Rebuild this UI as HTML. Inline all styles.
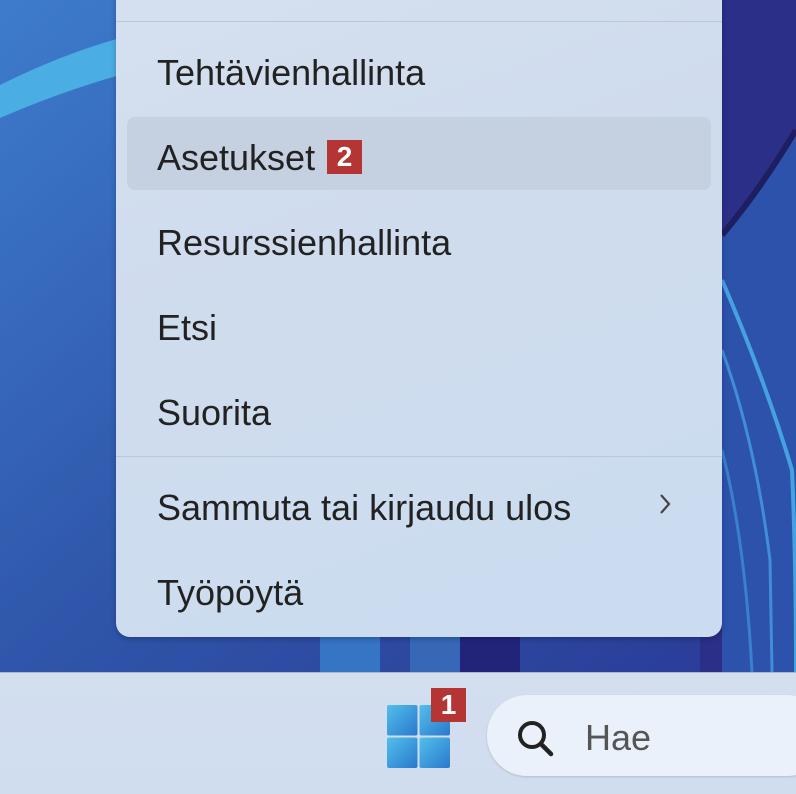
<!DOCTYPE html>
<html><head><meta charset="utf-8"><style>
*{margin:0;padding:0;box-sizing:border-box}
body{width:796px;height:794px;overflow:hidden;position:relative;font-family:"Liberation Sans",sans-serif;background:#2b3f9c}
#wall{position:absolute;left:0;top:0;width:796px;height:672px}
#menu{position:absolute;left:116px;top:-20px;width:606px;height:657px;border-radius:14px;background:linear-gradient(160deg,#d5e0ef 0%,#cfdcee 40%,#cbdcf0 100%);box-shadow:0 2px 6px rgba(0,0,30,.25)}
.it{position:absolute;left:41px;font-size:36px;color:#222;line-height:40px}
.div{position:absolute;left:0;width:606px;height:1px;background:#bcc8d8}
#hov{position:absolute;left:11px;top:137px;width:584px;height:73px;border-radius:8px;background:#c5d0e0}
.badge{position:absolute;width:35px;height:34px;background:#b53434;color:#fff;font-weight:bold;font-size:28px;text-align:center;line-height:34px}
#task{position:absolute;left:0;top:672px;width:796px;height:122px;background:linear-gradient(180deg,#d3dfef,#d0ddef);border-top:1px solid #a9b6cc}
#search{position:absolute;left:487px;top:695px;width:340px;height:81px;border-radius:40px;background:#eaf1fa;box-shadow:0 1px 2px rgba(0,0,0,.15)}
</style></head><body>
<svg id="wall" viewBox="0 0 796 672">
<defs>
<linearGradient id="g1" x1="0" y1="0" x2="1" y2="1"><stop offset="0" stop-color="#3e7ccb"/><stop offset=".5" stop-color="#2f56aa"/><stop offset="1" stop-color="#2a3a96"/></linearGradient>
</defs>
<rect width="796" height="672" fill="url(#g1)"/>
<rect x="700" y="0" width="96" height="672" fill="#2c2f88"/>
<path d="M0 85 Q60 55 120 38 L120 75 Q60 92 0 118Z" fill="#4aaee4"/>
<path d="M722 235 Q760 190 796 130 L796 672 L722 672Z" fill="#2d52ab"/>
<path d="M722 235 Q760 190 796 130" stroke="#1e1f60" stroke-width="6" fill="none"/>
<path d="M722 280 Q765 380 792 470 Q796 560 796 672" stroke="#45a2e0" stroke-width="4" fill="none"/>
<path d="M722 350 Q755 440 770 560 L772 672" stroke="#3f8ed6" stroke-width="3" fill="none"/>
<path d="M722 450 Q745 540 752 672" stroke="#3a80cc" stroke-width="3" fill="none"/>
<rect x="320" y="630" width="60" height="42" fill="#3674c4"/>
<rect x="410" y="630" width="50" height="42" fill="#3768b8"/>
<rect x="460" y="630" width="60" height="42" fill="#22247a"/>
</svg>
<div id="menu">
<div class="div" style="top:41px"></div>
<div id="hov"></div>
<div class="it" style="top:73px">Tehtävienhallinta</div>
<div class="it" style="top:158px">Asetukset</div>
<div class="badge" style="left:211px;top:160px">2</div>
<div class="it" style="top:243px">Resurssienhallinta</div>
<div class="it" style="top:328px">Etsi</div>
<div class="it" style="top:413px">Suorita</div>
<div class="div" style="top:476px"></div>
<div class="it" style="top:508px">Sammuta tai kirjaudu ulos</div>
<svg style="position:absolute;left:542px;top:513px" width="14" height="22"><path d="M3 2 L11 11 L3 20" stroke="#444" stroke-width="2.2" fill="none"/></svg>
<div class="it" style="top:593px">Työpöytä</div>
</div>
<div id="task"></div>
<svg style="position:absolute;left:387px;top:705px" width="63" height="63">
<defs><linearGradient id="w" x1="0" y1="0" x2="1" y2="1"><stop offset="0" stop-color="#53bfeb"/><stop offset="1" stop-color="#2a78cc"/></linearGradient></defs>
<rect x="0" y="0" width="30.5" height="30.5" rx="2" fill="url(#w)"/><rect x="32.5" y="0" width="30.5" height="30.5" rx="2" fill="url(#w)"/>
<rect x="0" y="32.5" width="30.5" height="30.5" rx="2" fill="url(#w)"/><rect x="32.5" y="32.5" width="30.5" height="30.5" rx="2" fill="url(#w)"/>
</svg>
<div class="badge" style="left:431px;top:688px">1</div>
<div id="search"></div>
<svg style="position:absolute;left:516px;top:718px" width="42" height="42"><circle cx="16" cy="17" r="12" stroke="#222" stroke-width="4" fill="none"/><path d="M25 26 L35 36" stroke="#222" stroke-width="4.5" stroke-linecap="round"/></svg>
<div style="position:absolute;left:585px;top:718px;font-size:36px;color:#555;line-height:40px">Hae</div>
</body></html>
